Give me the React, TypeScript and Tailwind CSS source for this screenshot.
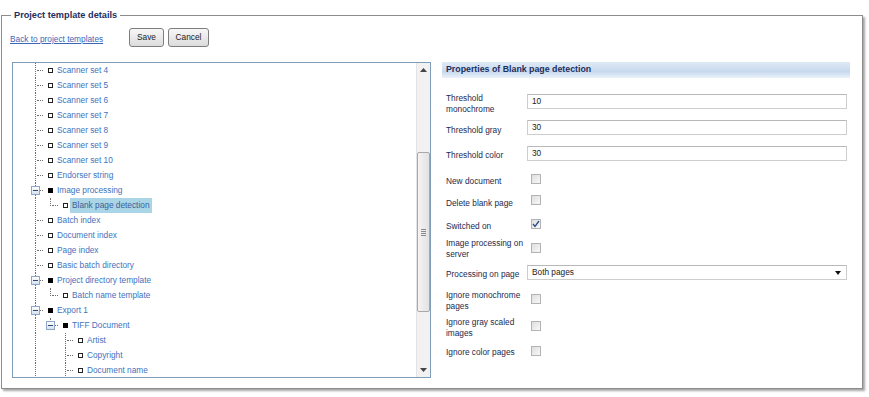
import React from "react";

type TNode = {
  label: string;
  level: number;
  guides?: boolean[];
  last?: boolean;
  expanded?: boolean;
  selected?: boolean;
};

const nodes: TNode[] = [
  { label: "Scanner set 4", level: 1 },
  { label: "Scanner set 5", level: 1 },
  { label: "Scanner set 6", level: 1 },
  { label: "Scanner set 7", level: 1 },
  { label: "Scanner set 8", level: 1 },
  { label: "Scanner set 9", level: 1 },
  { label: "Scanner set 10", level: 1 },
  { label: "Endorser string", level: 1 },
  { label: "Image processing", level: 1, expanded: true },
  { label: "Blank page detection", level: 2, last: true, selected: true, guides: [true] },
  { label: "Batch index", level: 1 },
  { label: "Document index", level: 1 },
  { label: "Page index", level: 1 },
  { label: "Basic batch directory", level: 1 },
  { label: "Project directory template", level: 1, expanded: true },
  { label: "Batch name template", level: 2, last: true, guides: [true] },
  { label: "Export 1", level: 1, expanded: true },
  { label: "TIFF Document", level: 2, last: true, expanded: true, guides: [true] },
  { label: "Artist", level: 3, guides: [true, false] },
  { label: "Copyright", level: 3, guides: [true, false] },
  { label: "Document name", level: 3, guides: [true, false] },
];

function Expander() {
  return (
    <div className="absolute left-[3px] top-[3px] w-[9px] h-[9px] border border-[#8fa6c8] bg-[linear-gradient(to_bottom,#ffffff,#d6e0ee)] flex items-center justify-center">
      <div className="w-[5px] h-px bg-[#2c4a78]" />
    </div>
  );
}

function TreeRow({ n }: { n: TNode }) {
  return (
    <div className="flex h-[15px] items-stretch pl-[15px]">
      {(n.guides || []).map((g, i) => (
        <div key={i} className="relative w-[15px] shrink-0">
          {g && <div className="absolute left-[7px] top-0 bottom-0 border-l border-dotted border-[#6e6e6e]" />}
        </div>
      ))}
      <div className="relative w-[15px] shrink-0">
        {n.last ? (
          <div className="absolute left-[7px] top-0 h-[8px] border-l border-dotted border-[#6e6e6e]" />
        ) : (
          <div className="absolute left-[7px] top-0 bottom-0 border-l border-dotted border-[#6e6e6e]" />
        )}
        <div className="absolute left-[9px] top-[7px] w-[6px] border-t border-dotted border-[#6e6e6e]" />
        {n.expanded && <Expander />}
      </div>
      <div className="flex items-center">
        {n.expanded ? (
          <span className="ml-[5px] w-[5px] h-[5px] bg-black shrink-0" />
        ) : (
          <span className="ml-[5px] w-[5px] h-[5px] border border-[#222] bg-white shrink-0" />
        )}
        <span
          className={
            "ml-[2px] px-[2px] h-[15px] flex items-center whitespace-nowrap text-[8.3px] " +
            (n.selected ? "bg-[#a9d5e6] text-[#3a5f98]" : "text-[#4372bd]")
          }
        >
          {n.label}
        </span>
      </div>
    </div>
  );
}

function Scrollbar() {
  return (
    <div className="w-[14px] shrink-0 flex flex-col bg-[#f1f1f1] border-l border-[#e4e4e4]">
      <div className="h-[14px] flex items-center justify-center">
        <svg width="7" height="4" viewBox="0 0 7 4">
          <path d="M0 4 L3.5 0 L7 4 Z" fill="#444" />
        </svg>
      </div>
      <div className="flex-1 flex flex-col pt-[75px]">
        <div className="h-[160px] rounded-[2px] border border-[#a9a9a9] bg-[linear-gradient(to_right,#f4f4f4,#e2e2e2)] flex flex-col items-center justify-center gap-[1px]">
          <div className="w-[5px] h-px bg-[#8a8a8a]" />
          <div className="w-[5px] h-px bg-[#8a8a8a]" />
          <div className="w-[5px] h-px bg-[#8a8a8a]" />
          <div className="w-[5px] h-px bg-[#8a8a8a]" />
        </div>
      </div>
      <div className="h-[14px] flex items-center justify-center">
        <svg width="7" height="4" viewBox="0 0 7 4">
          <path d="M0 0 L3.5 4 L7 0 Z" fill="#444" />
        </svg>
      </div>
    </div>
  );
}

function Checkbox({ checked }: { checked?: boolean }) {
  return (
    <div className="ml-[4px] w-[10px] h-[10px] border border-[#b3b3b3] bg-[linear-gradient(135deg,#dedede,#f8f8f8)] flex items-center justify-center">
      {checked && (
        <svg width="8" height="8" viewBox="0 0 8 8">
          <path d="M1 4 L3 6.5 L7 1" stroke="#2a4a8a" strokeWidth="1.3" fill="none" />
        </svg>
      )}
    </div>
  );
}

function TextInput({ value }: { value: string }) {
  return (
    <div className="w-[320px] h-[15px] border border-[#cdcdcd] border-t-[#b8b8b8] bg-white flex items-center pl-[4px] text-[8.3px] text-[#222]">
      {value}
    </div>
  );
}

function SelectBox({ value }: { value: string }) {
  return (
    <div className="w-[320px] h-[15px] border border-[#cdcdcd] border-t-[#b8b8b8] bg-white flex items-center justify-between pl-[4px] pr-[5px] text-[8.3px] text-[#222]">
      <span>{value}</span>
      <svg width="6" height="4" viewBox="0 0 6 4">
        <path d="M0 0 L3 4 L6 0 Z" fill="#111" />
      </svg>
    </div>
  );
}

type Row = {
  label: string;
  kind: "input" | "check" | "select";
  value?: string;
  checked?: boolean;
  h: number;
  lt: number;
  ct: number;
};

const rows: Row[] = [
  { label: "Threshold monochrome", kind: "input", value: "10", h: 27, lt: 0, ct: 1 },
  { label: "Threshold gray", kind: "input", value: "30", h: 26, lt: 5, ct: 0 },
  { label: "Threshold color", kind: "input", value: "30", h: 27, lt: 4, ct: 0 },
  { label: "New document", kind: "check", h: 22, lt: 3, ct: 1 },
  { label: "Delete blank page", kind: "check", h: 23, lt: 3, ct: 0 },
  { label: "Switched on", kind: "check", checked: true, h: 20, lt: 3, ct: 1 },
  { label: "Image processing on server", kind: "check", h: 27, lt: 0, ct: 5 },
  { label: "Processing on page", kind: "select", value: "Both pages", h: 25, lt: 4, ct: 0 },
  { label: "Ignore monochrome pages", kind: "check", h: 27, lt: 0, ct: 4 },
  { label: "Ignore gray scaled images", kind: "check", h: 29, lt: 0, ct: 4 },
  { label: "Ignore color pages", kind: "check", h: 20, lt: 1, ct: 0 },
];

const mtLabel: Record<number, string> = {
  0: "mt-0",
  1: "mt-[1px]",
  3: "mt-[3px]",
  4: "mt-[4px]",
  5: "mt-[5px]",
};

export default function App() {
  return (
    <div className="w-[869px] h-[397px] bg-white pt-[9px] overflow-hidden font-['Liberation_Sans',Arial,sans-serif]">
      <fieldset className="ml-[1px] w-[862px] h-[380px] border border-[#8c8c8c] shadow-[2px_2px_2px_rgba(0,0,0,0.35)]">
        <legend className="ml-[9px] px-[3px] text-[9.2px] leading-[12px] font-bold text-[#1d3060]">
          Project template details
        </legend>

        <div className="flex items-center pl-[8px] pt-[4px]">
          <div className="w-[119px]">
            <a href="#" className="text-[8.3px] text-[#3d66b6] underline">
              Back to project templates
            </a>
          </div>
          <button className="w-[35px] h-[19px] rounded-[3px] border border-[#7e7e7e] bg-[linear-gradient(to_bottom,#f7f7f7,#dcdcdc)] text-[8.3px] text-[#222]">
            Save
          </button>
          <button className="ml-[4px] w-[41px] h-[19px] rounded-[3px] border border-[#7e7e7e] bg-[linear-gradient(to_bottom,#f7f7f7,#dcdcdc)] text-[8.3px] text-[#222]">
            Cancel
          </button>
        </div>

        <div className="flex items-start pl-[10px] mt-[13px]">
          <div className="w-[419px] h-[316px] border border-[#7f9db9] bg-white flex overflow-hidden">
            <div className="flex-1 overflow-hidden">
              {nodes.map((n, i) => (
                <TreeRow key={i} n={n} />
              ))}
            </div>
            <Scrollbar />
          </div>

          <div className="ml-[11px] w-[408px]">
            <div className="h-[16px] pl-[4px] flex items-center bg-[linear-gradient(to_bottom,#dfe9f5,#c8d9ee_60%,#ebf2fa)] text-[8.8px] font-bold text-[#1a2f5e]">
              Properties of Blank page detection
            </div>
            <div className="mt-[15px] pl-[4px]">
              {rows.map((r, i) => (
                <div key={i} className="flex items-start" style={{ height: r.h }}>
                  <div
                    className={
                      "w-[81px] pr-[2px] text-[8.3px] leading-[11px] text-[#1b2a4e] " + mtLabel[r.lt]
                    }
                  >
                    {r.label}
                  </div>
                  <div className={mtLabel[r.ct]}>
                    {r.kind === "input" && <TextInput value={r.value || ""} />}
                    {r.kind === "select" && <SelectBox value={r.value || ""} />}
                    {r.kind === "check" && <Checkbox checked={r.checked} />}
                  </div>
                </div>
              ))}
            </div>
          </div>
        </div>
      </fieldset>
    </div>
  );
}
